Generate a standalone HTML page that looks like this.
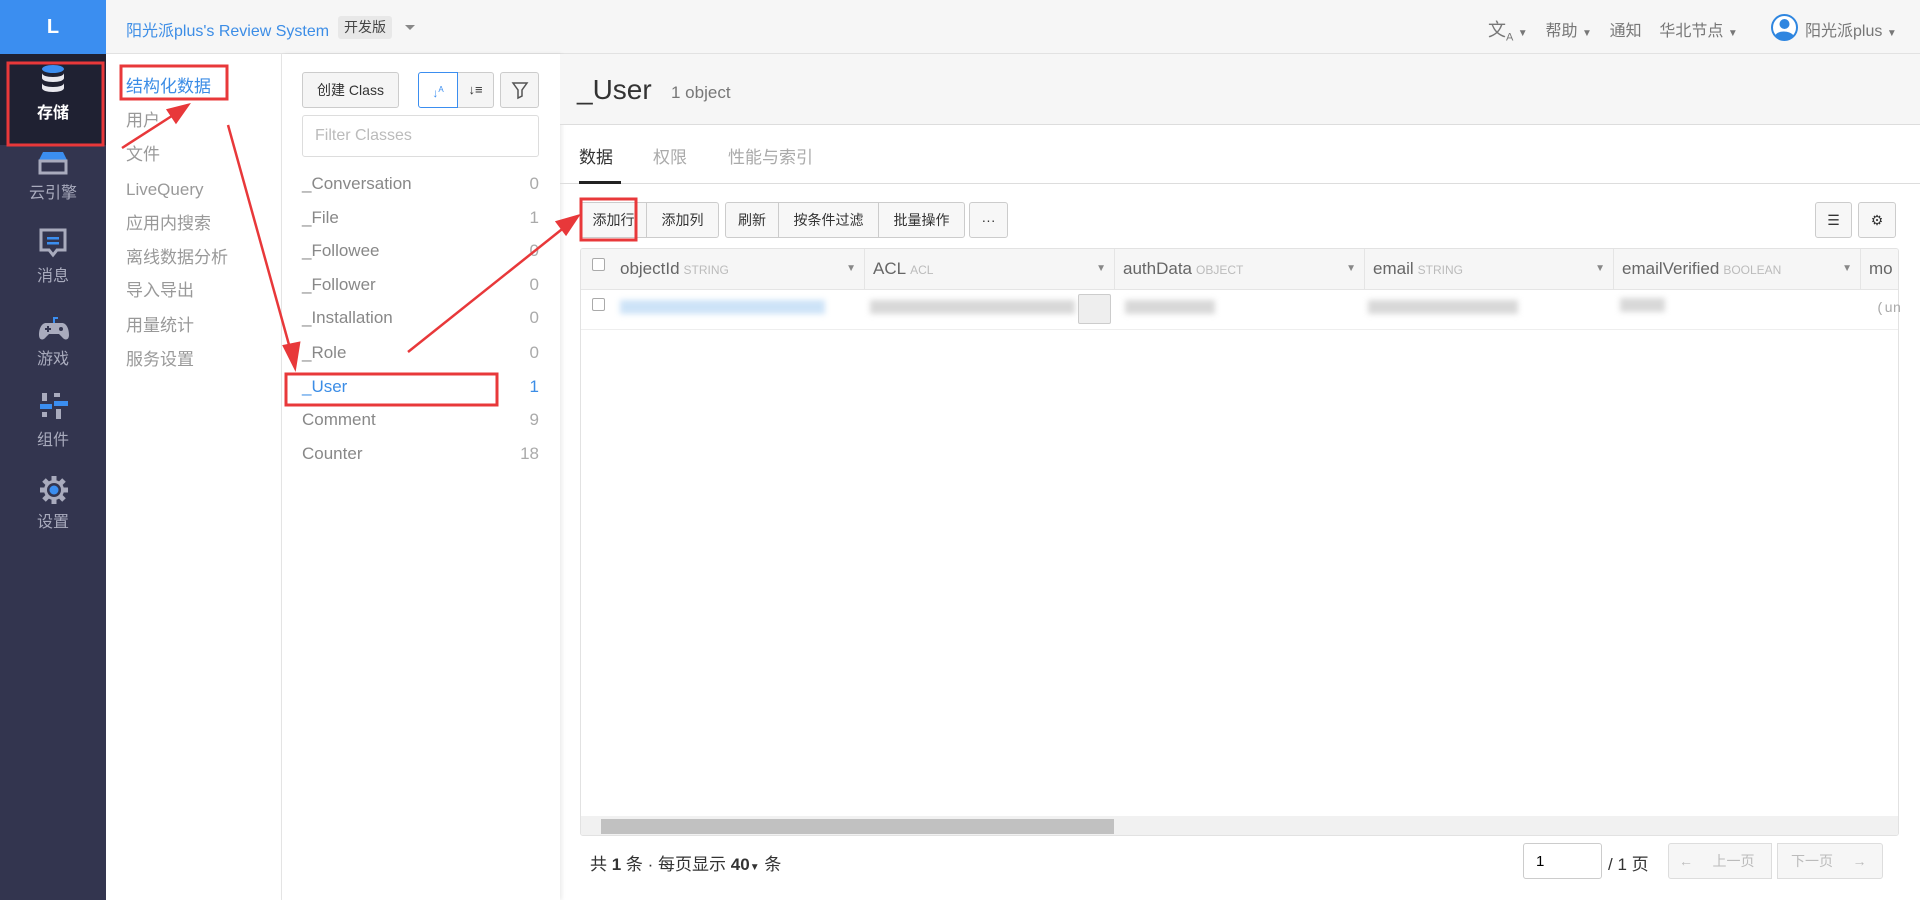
<!DOCTYPE html>
<html><head><meta charset="utf-8"><style>
*{box-sizing:border-box;margin:0;padding:0}
body{width:1920px;height:900px;overflow:hidden;position:relative;background:#fff;font-family:"Liberation Sans","Noto Sans CJK SC",sans-serif;}
.a{position:absolute}
.side{left:0;top:0;width:106px;height:900px;background:#33354f}
.logo{left:0;top:0;width:106px;height:54px;background:#3b8ef0;color:#fff;font-weight:bold;font-size:20px;text-align:center;line-height:54px}
.act{left:0;top:54px;width:106px;height:91px;background:#1f2132}
.sl{width:106px;text-align:center;font-size:16px;color:#a9abbd;line-height:20px}
.top{left:106px;top:0;width:1814px;height:54px;background:#f6f6f6;border-bottom:1px solid #e2e2e2}
.c2{left:106px;top:54px;width:176px;height:846px;background:#fff;border-right:1px solid #e6e6e6}
.c2 div{position:absolute;left:20px;font-size:17px;color:#999;white-space:nowrap;line-height:20px}
.c3{left:282px;top:54px;width:278px;height:846px;background:#fff;box-shadow:2px 0 4px rgba(0,0,0,.08)}
.btn{position:absolute;border:1px solid #ccc;border-radius:3px;background:#f5f5f5;font-size:14px;color:#333;text-align:center}
.cl{position:absolute;left:302px;width:237px;font-size:17px;color:#888;line-height:20px}
.cl span{float:right;color:#aaa}
.tb{position:absolute;top:202px;height:36px;line-height:34px;border:1px solid #ccc;background:#f7f7f7;font-size:14px;color:#333;text-align:center}
.th{position:absolute;top:249px;height:40px;line-height:40px;font-size:17px;color:#666;border-right:1px solid #e5e5e5;padding-left:8px;white-space:nowrap}
.th small{font-size:12px;color:#bbb;margin-left:4px}
.th i{position:absolute;right:8px;top:0;font-style:normal;font-size:10px;color:#888}
.blur{position:absolute;height:14px;filter:blur(3px);background:#d8d8d8}
</style></head><body>
<div class="a side"></div>
<div class="a logo">L</div>
<div class="a act"></div>
<svg class="a" style="left:37px;top:64px" width="32" height="34" viewBox="0 0 32 34"><ellipse cx="16" cy="5" rx="11" ry="4" fill="#3b8ef0"/><path d="M5 9v5c0 2.5 5 4 11 4s11-1.5 11-4V9c0 2.5-5 4-11 4S5 11.5 5 9z" fill="#e8e8ee"/><path d="M5 19v5c0 2.5 5 4 11 4s11-1.5 11-4v-5c0 2.5-5 4-11 4S5 21.5 5 19z" fill="#e8e8ee"/></svg>
<div class="a sl" style="top:104px;color:#fff;font-weight:bold">存储</div>
<svg class="a" style="left:38px;top:150px" width="30" height="26"><path d="M5 2h20l4 8H1z" fill="#3b8ef0"/><rect x="2" y="11" width="26" height="12" fill="none" stroke="#a9abbd" stroke-width="3"/></svg>
<div class="a sl" style="top:184px">云引擎</div>
<svg class="a" style="left:39px;top:228px" width="28" height="30"><path d="M2 2h24v20h-8l-4 5-4-5H2z" fill="none" stroke="#a9abbd" stroke-width="3"/><rect x="8" y="9" width="12" height="2.5" fill="#3b8ef0"/><rect x="8" y="14" width="12" height="2.5" fill="#3b8ef0"/></svg>
<div class="a sl" style="top:267px">消息</div>
<svg class="a" style="left:38px;top:315px" width="32" height="28"><path d="M8 8h16c4 0 7 5 7 12 0 5-4 6-7 2l-3-3H11l-3 3c-3 4-7 3-7-2 0-7 3-12 7-12z" fill="#a9abbd"/><path d="M16 8V3h4" stroke="#3b8ef0" stroke-width="2" fill="none"/><circle cx="23" cy="14" r="2" fill="#33354f"/><path d="M7 14h6M10 11v6" stroke="#33354f" stroke-width="2"/></svg>
<div class="a sl" style="top:350px">游戏</div>
<svg class="a" style="left:40px;top:392px" width="28" height="30"><rect x="2" y="1" width="5" height="8" fill="#a9abbd"/><rect x="14" y="1" width="6" height="4" fill="#a9abbd"/><rect x="0" y="12" width="12" height="5" fill="#3b8ef0"/><rect x="14" y="9" width="14" height="5" fill="#3b8ef0"/><rect x="2" y="20" width="5" height="5" fill="#a9abbd"/><rect x="16" y="17" width="5" height="10" fill="#a9abbd"/></svg>
<div class="a sl" style="top:431px">组件</div>
<svg class="a" style="left:39px;top:475px" width="30" height="30" viewBox="0 0 30 30"><g fill="#a9abbd"><circle cx="15" cy="15" r="10"/><g stroke="#a9abbd" stroke-width="5"><path d="M15 1v28M1 15h28M5 5l20 20M25 5L5 25"/></g></g><circle cx="15" cy="15" r="7" fill="#33354f"/><circle cx="15" cy="15" r="4.5" fill="#3b8ef0"/></svg>
<div class="a sl" style="top:513px">设置</div>

<div class="a top"></div>
<div class="a" style="left:126px;top:17px;font-size:16px;color:#3c8de6">阳光派plus's Review System</div>
<div class="a" style="left:338px;top:16px;height:23px;padding:0 6px;line-height:23px;background:#e8e8e8;border-radius:3px;font-size:14px;color:#444">开发版</div>
<div class="a" style="left:405px;top:25px;border:5px solid transparent;border-top:5px solid #888"></div>
<div class="a" style="left:1488px;top:16px;font-size:16px;color:#777;white-space:nowrap"><span style="font-size:18px">文<sub style="font-size:11px">A</sub></span> <span style="font-size:10px">▼</span>&nbsp;&nbsp;&nbsp; 帮助 <span style="font-size:10px">▼</span>&nbsp;&nbsp;&nbsp; 通知&nbsp;&nbsp;&nbsp; 华北节点 <span style="font-size:10px">▼</span></div>
<svg class="a" style="left:1771px;top:14px" width="27" height="27"><circle cx="13.5" cy="13.5" r="12.5" fill="#fff" stroke="#2f86e0" stroke-width="2"/><circle cx="13.5" cy="10" r="5" fill="#2f86e0"/><path d="M4 22c2-6 15-6 19 0a12 12 0 0 1-19 0z" fill="#2f86e0"/></svg>
<div class="a" style="left:1805px;top:17px;font-size:16px;color:#777;white-space:nowrap">阳光派plus <span style="font-size:10px">▼</span></div>

<div class="a c2">
<div style="top:23px;color:#3c8de6">结构化数据</div>
<div style="top:57px">用户</div><div style="top:91px">文件</div><div style="top:126px">LiveQuery</div>
<div style="top:160px">应用内搜索</div><div style="top:194px">离线数据分析</div><div style="top:227px">导入导出</div>
<div style="top:262px">用量统计</div><div style="top:296px">服务设置</div>
</div>
<div class="a c3"></div>
<div class="btn" style="left:302px;top:72px;width:97px;height:36px;line-height:34px">创建 Class</div>
<div class="btn" style="left:418px;top:72px;width:40px;height:36px;line-height:34px;border-color:#3b8ef0;background:#fff;color:#3b8ef0;z-index:2;border-radius:3px 0 0 3px;font-size:12px">↓<sup style="font-size:8px">A</sup></div>
<div class="btn" style="left:457px;top:72px;width:37px;height:36px;line-height:34px;border-radius:0 3px 3px 0;font-size:13px">↓≡</div>
<div class="btn" style="left:500px;top:72px;width:39px;height:36px"><svg width="20" height="20" style="margin-top:7px"><path d="M3 3h14l-5 7v6l-4 2v-8z" fill="none" stroke="#555" stroke-width="1.5"/></svg></div>
<div class="a" style="left:302px;top:115px;width:237px;height:42px;border:1px solid #ddd;border-radius:3px;font-size:16px;color:#bbb;padding:11px 12px">Filter Classes</div>
<div class="cl" style="top:174px">_Conversation<span>0</span></div>
<div class="cl" style="top:208px">_File<span>1</span></div>
<div class="cl" style="top:241px">_Followee<span>0</span></div>
<div class="cl" style="top:275px">_Follower<span>0</span></div>
<div class="cl" style="top:308px">_Installation<span>0</span></div>
<div class="cl" style="top:343px">_Role<span>0</span></div>
<div class="cl" style="top:377px;color:#3c8de6">_User<span style="color:#3c8de6">1</span></div>
<div class="cl" style="top:410px">Comment<span>9</span></div>
<div class="cl" style="top:444px">Counter<span>18</span></div>

<div class="a" style="left:560px;top:54px;width:1360px;height:71px;background:#f6f6f6;border-bottom:1px solid #ddd"></div>
<div class="a" style="left:577px;top:74px;font-size:28px;color:#333">_User</div>
<div class="a" style="left:671px;top:83px;font-size:17px;color:#777">1 object</div>
<div class="a" style="left:560px;top:183px;width:1360px;height:1px;background:#ddd"></div>
<div class="a" style="left:579px;top:181px;width:42px;height:3px;background:#222"></div>
<div class="a" style="left:579px;top:143px;font-size:17px;color:#333">数据</div>
<div class="a" style="left:653px;top:143px;font-size:17px;color:#aaa">权限</div>
<div class="a" style="left:728px;top:143px;font-size:17px;color:#aaa">性能与索引</div>

<div class="tb" style="left:580px;width:67px;border-radius:3px 0 0 3px">添加行</div>
<div class="tb" style="left:646px;width:73px;border-radius:0 3px 3px 0">添加列</div>
<div class="tb" style="left:725px;width:54px;border-radius:3px 0 0 3px">刷新</div>
<div class="tb" style="left:778px;width:101px">按条件过滤</div>
<div class="tb" style="left:878px;width:87px;border-radius:0 3px 3px 0">批量操作</div>
<div class="tb" style="left:969px;width:39px;border-radius:3px">···</div>
<div class="tb" style="left:1815px;width:37px;border-radius:3px">☰</div>
<div class="tb" style="left:1858px;width:38px;border-radius:3px">⚙</div>

<div class="a" style="left:580px;top:248px;width:1319px;height:588px;border:1px solid #e2e2e2;border-radius:3px;overflow:hidden">
<div class="a" style="left:0;top:0;width:1319px;height:41px;background:#f6f6f6;border-bottom:1px solid #e5e5e5"></div>
<div class="a" style="left:0;top:80px;width:1319px;height:1px;background:#eee"></div>
<div class="a" style="left:0;top:567px;width:1319px;height:21px;background:#f1f1f1"></div>
<div class="a" style="left:20px;top:570px;width:513px;height:15px;background:#c1c1c1"></div>
</div>
<div class="a" style="left:592px;top:258px;width:13px;height:13px;border:1px solid #aaa;border-radius:2px;background:#fff"></div>
<div class="a" style="left:592px;top:298px;width:13px;height:13px;border:1px solid #aaa;border-radius:2px;background:#fff"></div>
<div class="th" style="left:612px;width:253px">objectId<small>STRING</small><i>▼</i></div>
<div class="th" style="left:865px;width:250px">ACL<small>ACL</small><i>▼</i></div>
<div class="th" style="left:1115px;width:250px">authData<small>OBJECT</small><i>▼</i></div>
<div class="th" style="left:1365px;width:249px">email<small>STRING</small><i>▼</i></div>
<div class="th" style="left:1614px;width:247px">emailVerified<small>BOOLEAN</small><i>▼</i></div>
<div class="th" style="left:1861px;width:38px;border:none;overflow:hidden">mo</div>
<div class="blur" style="left:620px;top:300px;width:205px;background:#cde3f7"></div>
<div class="blur" style="left:870px;top:300px;width:205px"></div>
<div class="a" style="left:1078px;top:294px;width:33px;height:30px;border:1px solid #ccc;background:#eee;border-radius:2px"></div>
<div class="blur" style="left:1125px;top:300px;width:90px"></div>
<div class="blur" style="left:1368px;top:300px;width:150px"></div>
<div class="blur" style="left:1620px;top:298px;width:45px"></div>
<div class="a" style="left:1876px;top:301px;font-size:14px;color:#aaa;font-family:'Liberation Mono',monospace">(un</div>

<div class="a" style="left:590px;top:850px;font-size:17px;color:#333;white-space:nowrap">共 <b>1</b> 条 · 每页显示 <b>40</b><span style="font-size:10px">▼</span> 条</div>
<div class="a" style="left:1523px;top:843px;width:79px;height:36px;border:1px solid #ccc;border-radius:3px;font-size:15px;padding:9px 12px">1</div>
<div class="a" style="left:1608px;top:850px;font-size:17px;color:#333">/ 1 页</div>
<div class="a" style="left:1668px;top:843px;width:104px;height:36px;border:1px solid #ddd;border-radius:3px 0 0 3px;background:#f6f6f6;font-size:14px;color:#bbb;line-height:34px;padding-left:10px">←&nbsp;&nbsp;&nbsp;&nbsp; 上一页</div>
<div class="a" style="left:1777px;top:843px;width:106px;height:36px;border:1px solid #ddd;border-radius:0 3px 3px 0;background:#f6f6f6;font-size:14px;color:#bbb;line-height:34px;padding-left:13px">下一页&nbsp;&nbsp;&nbsp;&nbsp; →</div>

<svg class="a" style="left:0;top:0" width="1920" height="900">
<g fill="none" stroke="#e8383a" stroke-width="3">
<rect x="8" y="63" width="95" height="82"/>
<rect x="121" y="66" width="106" height="33"/>
<rect x="286" y="374" width="211" height="31"/>
<rect x="581" y="199" width="55" height="41"/>
</g>
<g stroke="#e8383a" stroke-width="2.5" fill="#e8383a">
<line x1="122" y1="148" x2="178" y2="112"/><polygon points="188,105 168,110 176,122"/>
<line x1="228" y1="125" x2="291" y2="352"/><polygon points="295,368 284,346 299,343"/>
<line x1="408" y1="352" x2="566" y2="226"/><polygon points="578,216 557,222 566,234"/>
</g>
</svg>
</body></html>
